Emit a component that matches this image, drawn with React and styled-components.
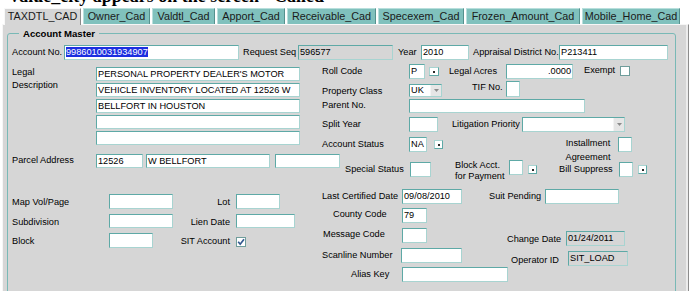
import styled, { createGlobalStyle } from "styled-components";

const GlobalStyle = createGlobalStyle`
  body {
    margin: 0;
    background: #ffffff;
    font-family: "Liberation Sans", Arial, sans-serif;
  }
`;

const tabs = [
  { name: "TAXDTL_CAD", w: 77, active: true },
  { name: "Owner_Cad", w: 67 },
  { name: "Valdtl_Cad", w: 63 },
  { name: "Apport_Cad", w: 68 },
  { name: "Receivable_Cad", w: 89 },
  { name: "Specexem_Cad", w: 86 },
  { name: "Frozen_Amount_Cad", w: 114 },
  { name: "Mobile_Home_Cad", w: 98 },
];

const legalLines = [
  "PERSONAL PROPERTY DEALER'S MOTOR",
  "VEHICLE INVENTORY LOCATED AT 12526 W",
  "BELLFORT IN HOUSTON",
  "",
  "",
];

function Dropdown({ w, h, value }) {
  return (
    <Select $w={w} $h={h}>
      <SelectValue>{value}</SelectValue>
      <SelectArrow>
        <svg width="5" height="3" viewBox="0 0 5 3">
          <path d="M0 0 L5 0 L2.5 3 Z" fill="#8c8c8c" />
        </svg>
      </SelectArrow>
    </Select>
  );
}

function Checkbox({ checked, mt }) {
  return (
    <Check $mt={mt}>
      {checked && (
        <svg width="8" height="8" viewBox="0 0 8 8">
          <path d="M1.2 3.8 L3.2 6.2 L7 1.2" fill="none" stroke="#34598f" strokeWidth="1.7" />
        </svg>
      )}
    </Check>
  );
}

export default function App() {
  return (
    <Page>
      <GlobalStyle />
      <Heading>Value_city appears on the screen - Called</Heading>
      <TabBar>
        {tabs.map((tab) => (
          <Tab key={tab.name} $w={tab.w} $active={tab.active}>
            {tab.name}
          </Tab>
        ))}
      </TabBar>
      <Panel>
        <GroupBox>
          <Legend>Account Master</Legend>

          <Row $h={15}>
            <Label $w={52} $mt={2}>Account No.</Label>
            <Field $w={175}>
              <Selected>9986010031934907</Selected>
            </Field>
            <Label $ml={4} $w={55} $mt={2}>Request Seq</Label>
            <Field $w={95} $gray>596577</Field>
            <Label $ml={5} $w={23} $mt={2}>Year</Label>
            <Field $w={48}>2010</Field>
            <Label $ml={4} $w={86} $mt={2}>Appraisal District No.</Label>
            <Field $w={109}>P213411</Field>
          </Row>

          <Band $mt={2}>
            <Column $w={310}>
              <Row>
                <Label $w={84} $mt={4} $lh={13}>
                  Legal
                  <br />
                  Description
                </Label>
                <Stack>
                  {legalLines.map((line, i) => (
                    <Field key={i} $w={204} $h={14}>
                      {line}
                    </Field>
                  ))}
                </Stack>
              </Row>
            </Column>
            <Column>
              <Row $mt={2} $h={15}>
                <Label $w={87} $mt={2}>Roll Code</Label>
                <Field $w={16}>P</Field>
                <Pick $ml={4} $mt={3} />
                <Label $ml={10} $w={57} $mt={2}>Legal Acres</Label>
                <Field $w={67} $right>.0000</Field>
                <Label $ml={11} $w={36} $mt={1}>Exempt</Label>
                <Checkbox mt={2} />
              </Row>
              <Row $mt={2} $h={16}>
                <Label $w={87} $mt={5}>Property Class</Label>
                <Dropdown w={33} h={13} value="UK" />
                <Label $ml={30} $w={34} $mt={1}>TIF No.</Label>
                <Field $w={14} $h={16} />
              </Row>
              <Row $mt={2} $h={14}>
                <Label $w={87} $mt={1}>Parent No.</Label>
                <Field $w={176} $h={14} />
              </Row>
              <Row $mt={4} $h={15}>
                <Label $w={87} $mt={2}>Split Year</Label>
                <Field $w={29} />
                <Label $ml={14} $w={70} $mt={2}>Litigation Priority</Label>
                <Dropdown w={103} h={15} value="" />
              </Row>
              <Row $mt={5} $h={15}>
                <Label $w={87} $mt={2}>Account Status</Label>
                <Field $w={18}>NA</Field>
                <Pick $ml={7} $mt={3} $w={9} />
                <Label $ml={115} $w={60} $mt={-1} $lh={14} $align="center">
                  Installment
                  <br />
                  Agreement
                </Label>
                <Field $w={14} />
              </Row>
            </Column>
          </Band>

          <Row $mt={2} $h={24}>
            <Label $w={84} $mt={1}>Parcel Address</Label>
            <Field $w={47} $h={14}>12526</Field>
            <Field $ml={3} $w={124} $h={14}>W BELLFORT</Field>
            <Field $ml={5} $w={65} $h={14} />
            <Label $ml={5} $w={65} $mt={10}>Special Status</Label>
            <Field $w={21} $mt={8} />
            <Label $ml={24} $w={54} $mt={6}>
              Block Acct.
              <br />
              for Payment
            </Label>
            <Field $w={14} $mt={6} />
            <Pick $ml={5} $w={9} $mt={11} />
            <Label $ml={22} $w={60} $mt={10}>Bill Suppress</Label>
            <Field $w={14} $mt={8} />
            <Pick $ml={5} $w={9} $mt={11} />
          </Row>

          <Band $mt={11}>
            <Column $w={310}>
              <Row $mt={5} $h={15}>
                <Label $w={97} $mt={3}>Map Vol/Page</Label>
                <Field $w={64} />
                <Label $w={63} $mt={3} $align="right" $pr={6}>Lot</Label>
                <Field $w={44} />
              </Row>
              <Row $mt={5} $h={15}>
                <Label $w={97} $mt={3}>Subdivision</Label>
                <Field $w={64} $h={14} />
                <Label $w={63} $mt={3} $align="right" $pr={6}>Lien Date</Label>
                <Field $w={59} $h={14} />
              </Row>
              <Row $mt={4} $h={15}>
                <Label $w={97} $mt={3}>Block</Label>
                <Field $w={44} />
                <Label $w={83} $mt={3} $align="right" $pr={6}>SIT Account</Label>
                <Checkbox checked mt={4} />
              </Row>
            </Column>
            <Column>
              <Row $h={15}>
                <Label $w={80} $mt={2}>Last Certified Date</Label>
                <Field $w={60}>09/08/2010</Field>
                <Label $ml={27} $w={56} $mt={2}>Suit Pending</Label>
                <Field $w={74} />
              </Row>
              <Row $mt={4} $h={15}>
                <Label $w={80} $pl={11} $mt={1}>County Code</Label>
                <Field $w={25}>79</Field>
              </Row>
              <Row $mt={5} $h={15}>
                <Label $w={80} $pl={1} $mt={1}>Message Code</Label>
                <Field $w={25} />
                <Label $ml={80} $w={59} $mt={6}>Change Date</Label>
                <Field $w={59} $mt={3} $gray>01/24/2011</Field>
              </Row>
              <Row $mt={5} $h={15}>
                <Label $w={79} $mt={2}>Scanline Number</Label>
                <Field $w={61} />
                <Label $ml={49} $w={57} $mt={7}>Operator ID</Label>
                <Field $w={60} $mt={3} $gray>SIT_LOAD</Field>
              </Row>
              <Row $mt={4} $h={15}>
                <Label $w={80} $pl={29} $mt={2}>Alias Key</Label>
                <Field $w={106} />
              </Row>
            </Column>
          </Band>
        </GroupBox>
      </Panel>
    </Page>
  );
}

const Page = styled.div`
  width: 694px;
  height: 291px;
  overflow: hidden;
  background: #ffffff;
`;

const Heading = styled.div`
  margin: -14px 0 0 8px;
  height: 20px;
  font: bold 18px/20px "Liberation Serif", "Times New Roman", serif;
  color: #000000;
  white-space: nowrap;
`;

const TabBar = styled.div`
  display: flex;
  align-items: flex-end;
  gap: 2px;
  height: 18px;
  padding-left: 4px;
`;

const Tab = styled.div`
  position: relative;
  z-index: ${(p) => (p.$active ? 2 : 1)};
  flex: none;
  box-sizing: border-box;
  width: ${(p) => p.$w}px;
  height: ${(p) => (p.$active ? 17 : 16)}px;
  margin-bottom: ${(p) => (p.$active ? -1 : 0)}px;
  background: ${(p) => (p.$active ? "#d6d6d6" : "#80c1bd")};
  border: 1px solid;
  border-bottom: none;
  border-color: ${(p) =>
    p.$active
      ? "#f8f8f8 #8a8a8a #8a8a8a #f8f8f8"
      : "#b8dfdc #55918e #55918e #b8dfdc"};
  font-size: 10.8px;
  line-height: 14px;
  text-align: center;
  color: #1a1a1a;
  white-space: nowrap;
`;

const Panel = styled.div`
  margin-left: 2px;
  width: 687px;
  height: 280px;
  box-sizing: border-box;
  background: #d6d6d6;
  border: 1px solid;
  border-color: #f6f6f6 #8c8c8c #8c8c8c #f6f6f6;
  box-shadow: inset -2px 0 0 #ececec;
  padding: 8px 0 0 4px;
`;

const GroupBox = styled.div`
  position: relative;
  width: 669px;
  height: 300px;
  box-sizing: border-box;
  border: 1px solid #79b9b6;
  border-radius: 3px;
  padding: 11px 0 0 4px;
`;

const Legend = styled.div`
  position: absolute;
  left: 11px;
  top: -7px;
  padding: 0 4px;
  background: #d6d6d6;
  font-weight: bold;
  font-size: 9.6px;
  line-height: 14px;
  color: #000000;
`;

const Band = styled.div`
  display: flex;
  align-items: flex-start;
  margin-top: ${(p) => p.$mt || 0}px;
`;

const Column = styled.div`
  display: flex;
  flex-direction: column;
  flex: none;
  width: ${(p) => (p.$w ? `${p.$w}px` : "auto")};
`;

const Row = styled.div`
  display: flex;
  align-items: flex-start;
  margin-top: ${(p) => p.$mt || 0}px;
  height: ${(p) => (p.$h ? `${p.$h}px` : "auto")};
`;

const Stack = styled.div`
  display: flex;
  flex-direction: column;
  gap: 2px;
  margin-top: 5px;
`;

const Label = styled.div`
  flex: none;
  box-sizing: border-box;
  width: ${(p) => p.$w}px;
  margin-top: ${(p) => p.$mt || 0}px;
  margin-left: ${(p) => p.$ml || 0}px;
  padding-left: ${(p) => p.$pl || 0}px;
  padding-right: ${(p) => p.$pr || 0}px;
  text-align: ${(p) => p.$align || "left"};
  font-size: 9.2px;
  line-height: ${(p) => p.$lh || 11}px;
  color: #000000;
  white-space: nowrap;
`;

const Field = styled.div`
  flex: none;
  box-sizing: border-box;
  width: ${(p) => p.$w}px;
  height: ${(p) => p.$h || 15}px;
  margin-top: ${(p) => p.$mt || 0}px;
  margin-left: ${(p) => p.$ml || 0}px;
  padding: 0 1px;
  background: ${(p) => (p.$gray ? "#d6d6d6" : "#ffffff")};
  border: 1px solid;
  border-color: #5ea9a6 #a8d4d1 #a8d4d1 #5ea9a6;
  font-size: 9.2px;
  line-height: ${(p) => (p.$h || 15) - 2}px;
  text-align: ${(p) => (p.$right ? "right" : "left")};
  color: #000000;
  white-space: nowrap;
  overflow: hidden;
`;

const Selected = styled.span`
  background: #1c2fe0;
  color: #ffffff;
`;

const Pick = styled.div`
  flex: none;
  display: flex;
  align-items: center;
  justify-content: center;
  box-sizing: border-box;
  width: ${(p) => p.$w || 10}px;
  height: 9px;
  margin-top: ${(p) => p.$mt || 0}px;
  margin-left: ${(p) => p.$ml || 0}px;
  background: #ffffff;
  border: 1px solid;
  border-color: #a8d4d1 #5ea9a6 #5ea9a6 #a8d4d1;
  &::after {
    content: "";
    width: 2px;
    height: 2px;
    background: #2a2a2a;
  }
`;

const Select = styled.div`
  flex: none;
  display: flex;
  box-sizing: border-box;
  width: ${(p) => p.$w}px;
  height: ${(p) => p.$h}px;
  margin-top: ${(p) => (p.$h < 15 ? 3 : 0)}px;
  background: #ffffff;
  border: 1px solid;
  border-color: #5ea9a6 #a8d4d1 #a8d4d1 #5ea9a6;
  font-size: 9.2px;
  line-height: ${(p) => p.$h - 2}px;
`;

const SelectValue = styled.div`
  flex: 1;
  padding-left: 1px;
  overflow: hidden;
`;

const SelectArrow = styled.div`
  flex: none;
  display: flex;
  align-items: center;
  justify-content: center;
  width: 10px;
  background: #e6e6e6;
  border-left: 1px solid #f4f4f4;
`;

const Check = styled.div`
  flex: none;
  display: flex;
  align-items: center;
  justify-content: center;
  box-sizing: border-box;
  width: 10px;
  height: 10px;
  margin-top: ${(p) => p.$mt || 0}px;
  background: #ffffff;
  border: 1px solid #6f9d9b;
`;
